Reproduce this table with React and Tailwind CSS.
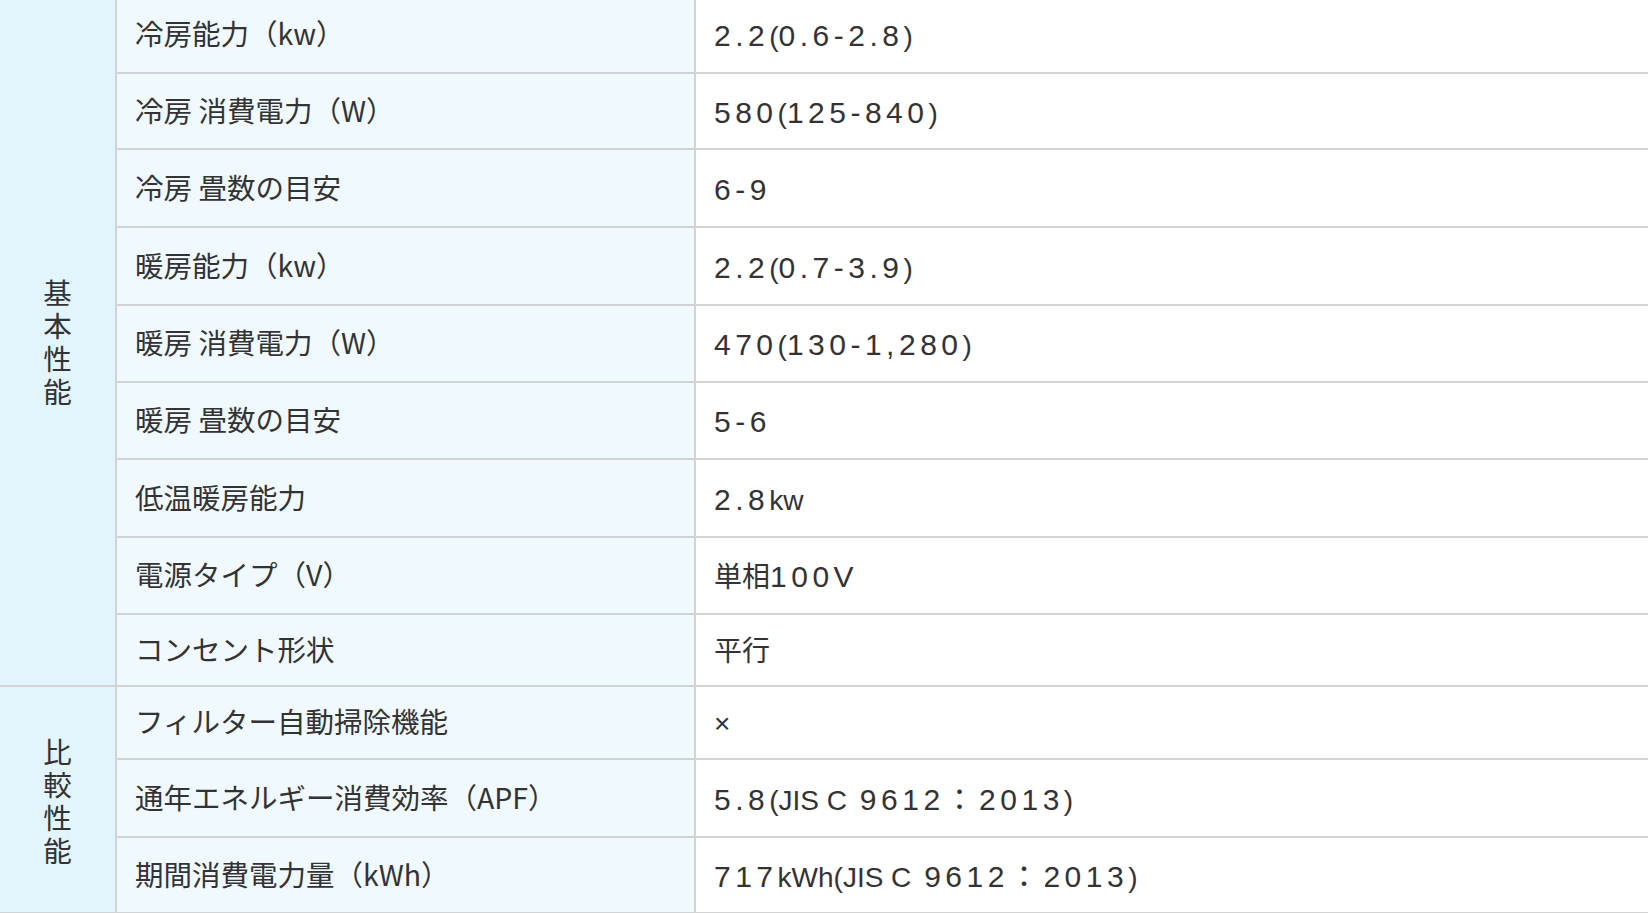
import React from "react";

const B = (t) => ({ t, big: true });
const S = (t) => ({ t, big: false });

const rows = [
  { label: "冷房能力（kw）", value: [B("2.2"), S("("), B("0.6-2.8"), S(")")] },
  { label: "冷房 消費電力（W）", value: [B("580"), S("("), B("125-840"), S(")")] },
  { label: "冷房 畳数の目安", value: [B("6-9")] },
  { label: "暖房能力（kw）", value: [B("2.2"), S("("), B("0.7-3.9"), S(")")] },
  { label: "暖房 消費電力（W）", value: [B("470"), S("("), B("130-1,280"), S(")")] },
  { label: "暖房 畳数の目安", value: [B("5-6")] },
  { label: "低温暖房能力", value: [B("2.8"), S("kw")] },
  { label: "電源タイプ（V）", value: [S("単相"), B("100V")] },
  { label: "コンセント形状", value: [S("平行")] },
  { label: "フィルター自動掃除機能", value: [S("×")] },
  { label: "通年エネルギー消費効率（APF）", value: [B("5.8"), S("(JIS C"), B(" 9612：2013"), S(")")] },
  { label: "期間消費電力量（kWh）", value: [B("717"), S("kWh(JIS C"), B(" 9612：2013"), S(")")] },
];

function Value({ parts }) {
  return (
    <span className="whitespace-pre">
      {parts.map((p, i) =>
        p.big ? (
          <span key={i} className="text-[30px] tracking-[0.15em] font-['Liberation_Sans','Noto_Sans_CJK_JP',sans-serif]">
            {p.t}
          </span>
        ) : (
          <span key={i} className="text-[28px] font-['Liberation_Sans','Noto_Sans_CJK_JP',sans-serif]">
            {p.t}
          </span>
        )
      )}
    </span>
  );
}

export default function App() {
  return (
    <div className="w-[1648px] h-[913px] overflow-hidden bg-white text-[#333] font-['Noto_Sans_CJK_JP',sans-serif]">
      <div className="-mt-[4px] grid grid-cols-[117px_579px_1fr] grid-rows-[78px_76px_78px_78px_77px_77px_78px_77px_72px_73px_78px_76px]">
        <div className="col-start-1 row-start-1 row-span-9 bg-[#e2f5fd] border-r-2 border-b-2 border-[#d3d3d3] flex items-center justify-center">
          <div className="w-[29px] text-[28.5px] leading-[33px] text-center break-all">基本性能</div>
        </div>
        <div className="col-start-1 row-start-10 row-span-3 bg-[#e2f5fd] border-r-2 border-b-2 border-[#d3d3d3] flex items-center justify-center">
          <div className="w-[29px] text-[28.5px] leading-[33px] text-center break-all">比較性能</div>
        </div>
        {rows.map((r, i) => (
          <React.Fragment key={i}>
            <div className="col-start-2 bg-[#f0f9fe] border-r-2 border-b-2 border-[#d3d3d3] flex items-center pl-[18px] text-[28.5px] leading-none pb-[2px]">
              {r.label}
            </div>
            <div className="col-start-3 bg-white border-b-2 border-[#d3d3d3] flex items-center pl-[18px] pt-[3px] leading-none">
              <Value parts={r.value} />
            </div>
          </React.Fragment>
        ))}
      </div>
    </div>
  );
}
